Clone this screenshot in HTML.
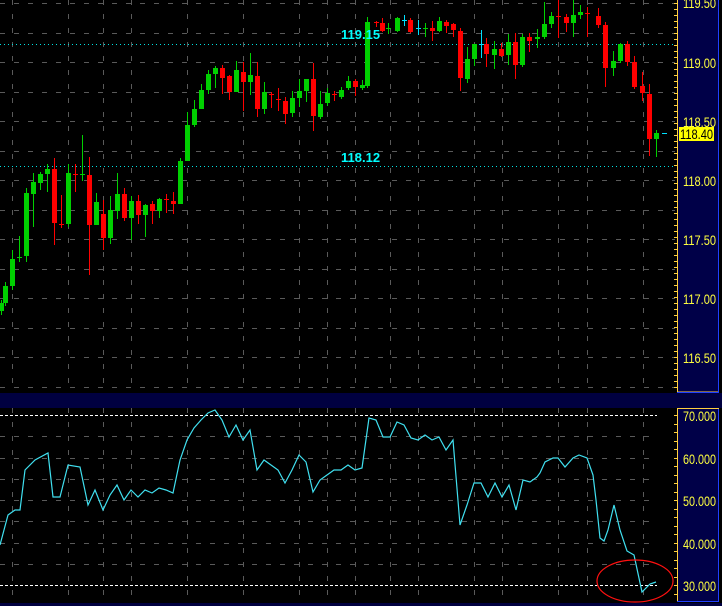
<!DOCTYPE html><html><head><style>body{margin:0;background:#000;width:722px;height:606px;overflow:hidden}svg{display:block}</style></head><body>
<svg id="s" width="722" height="606" xmlns="http://www.w3.org/2000/svg" font-family="Liberation Sans, sans-serif">
<rect width="722" height="606" fill="#000"/>
<g id="grid" stroke="#5a5a5a" stroke-width="1" stroke-dasharray="5,9"></g>
<line x1="0" y1="44.5" x2="675" y2="44.5" stroke="#00e0e0" stroke-dasharray="1,3"/>
<line x1="0" y1="166.5" x2="675" y2="166.5" stroke="#00e0e0" stroke-dasharray="1,3"/>
<g id="c"></g>
<text x="341" y="39" fill="#00ffff" font-size="13" font-weight="bold">119.15</text>
<text x="341" y="162" fill="#00ffff" font-size="13" font-weight="bold">118.12</text>
<rect x="0" y="393" width="722" height="15" fill="#000040"/>
<rect x="0" y="603" width="722" height="3" fill="#000040"/>
<line x1="0" y1="415.5" x2="657" y2="415.5" stroke="#fff" stroke-dasharray="3,2"/>
<line x1="0" y1="585.5" x2="657" y2="585.5" stroke="#fff" stroke-dasharray="3,2"/>
<polyline id="rsi" fill="none" stroke="#40e0f0" stroke-width="1.2"/>
<ellipse cx="635" cy="581" rx="38" ry="21" fill="none" stroke="#ff1010" stroke-width="1.2"/>
<rect x="677.5" y="-1" width="41" height="393" fill="#000048" stroke="#ffd040"/>
<line x1="718.5" y1="0" x2="718.5" y2="392" stroke="#2040ff"/>
<line x1="677" y1="392.5" x2="719" y2="392.5" stroke="#2040ff"/>
<rect x="677.5" y="408.5" width="41" height="193" fill="#000048" stroke="#ffd040"/>
<line x1="718.5" y1="409" x2="718.5" y2="602" stroke="#2040ff"/>
<line x1="677" y1="601.5" x2="719" y2="601.5" stroke="#2040ff"/>
<g id="ticks" stroke="#ffd040"></g>
<g fill="#ffff40" font-size="14">
<text x="683" y="8" textLength="33" lengthAdjust="spacingAndGlyphs">119.50</text><text x="683" y="68" textLength="33" lengthAdjust="spacingAndGlyphs">119.00</text><text x="683" y="127" textLength="33" lengthAdjust="spacingAndGlyphs">118.50</text><text x="683" y="186" textLength="33" lengthAdjust="spacingAndGlyphs">118.00</text><text x="683" y="245" textLength="33" lengthAdjust="spacingAndGlyphs">117.50</text><text x="683" y="304" textLength="33" lengthAdjust="spacingAndGlyphs">117.00</text><text x="683" y="363" textLength="33" lengthAdjust="spacingAndGlyphs">116.50</text>
<text x="683" y="421" textLength="33" lengthAdjust="spacingAndGlyphs">70.000</text><text x="683" y="464" textLength="33" lengthAdjust="spacingAndGlyphs">60.000</text><text x="683" y="506" textLength="33" lengthAdjust="spacingAndGlyphs">50.000</text><text x="683" y="549" textLength="33" lengthAdjust="spacingAndGlyphs">40.000</text><text x="683" y="591" textLength="33" lengthAdjust="spacingAndGlyphs">30.000</text>
</g>
<rect x="679" y="127" width="35" height="14" fill="#ffff00"/>
<text x="680" y="139" fill="#000" font-size="14" textLength="33" lengthAdjust="spacingAndGlyphs">118.40</text>
</svg>
<script>
var NS="http://www.w3.org/2000/svg";
function el(p,t,a){var e=document.createElementNS(NS,t);for(var k in a)e.setAttribute(k,a[k]);p.appendChild(e);return e;}
var g=document.getElementById('grid');
var vx=[12,68,103,131,187,243,299,327,355,390,418,474,502,558,587,643];
vx.forEach(function(x){el(g,'line',{x1:x+.5,y1:0,x2:x+.5,y2:392});el(g,'line',{x1:x+.5,y1:408,x2:x+.5,y2:602});});
for(var i=0;i<14;i++){var y=Math.round(3+i*29.5)+.5;el(g,'line',{x1:0,y1:y,x2:675,y2:y});}
[436,458,479,500,521,543,564].forEach(function(y){el(g,'line',{x1:0,y1:y+.5,x2:657,y2:y+.5});});
var t=document.getElementById('ticks');
for(var y=3;y<392;y+=6){el(t,'line',{x1:674,y1:y+.5,x2:678,y2:y+.5});}
for(var y=415;y<600;y+=8.5){el(t,'line',{x1:674,y1:Math.round(y)+.5,x2:678,y2:Math.round(y)+.5});}
var C=[[1,303,311,'g',300,315],[5,286,303,'g',282,306],[12,259,286,'g',250,290],[19,257,257,'g',236,262],[26,193,256,'g',188,262],[33,182,194,'g',173,227],[40,174,183,'g',172,190],[47,169,174,'g',164,192],[54,169,223,'r',158,245],[61,224,224,'r',195,228],[68,173,224,'g',164,227],[75,174,174,'r',164,192],[82,174,174,'g',135,181],[89,175,225,'r',157,275],[96,202,225,'g',193,225],[103,214,238,'r',200,250],[110,210,238,'g',196,244],[117,194,211,'g',173,219],[124,194,218,'r',188,221],[131,201,218,'g',196,240],[138,201,215,'r',195,224],[145,205,215,'g',204,237],[152,204,211,'r',201,224],[159,199,211,'g',198,218],[166,199,199,'r',194,213],[173,201,204,'r',192,214],[180,161,204,'g',158,204],[187,125,161,'g',112,161],[194,109,125,'g',100,127],[201,90,109,'g',84,109],[208,74,90,'g',70,94],[215,68,74,'g',66,88],[222,68,78,'r',65,94],[229,76,92,'r',75,100],[236,70,92,'g',61,92],[243,72,82,'r',62,111],[250,75,82,'g',53,95],[257,76,109,'r',62,117],[264,92,109,'g',82,114],[271,94,94,'r',92,108],[278,99,99,'r',88,111],[285,101,114,'r',97,124],[292,98,113,'g',91,117],[299,91,98,'g',79,107],[306,79,91,'g',85,102],[313,79,116,'r',63,131],[320,104,117,'g',91,119],[327,93,103,'g',88,106],[334,94,94,'r',91,101],[341,90,97,'g',87,99],[348,81,88,'g',76,90],[355,81,87,'r',79,96],
[362,85,88,'g',80,90],[367,22,86,'g',17,88],[376,22,22,'r',21,27],[382,23,31,'r',18,32],[388,28,28,'g',23,34],[397,18,31,'g',17,32],[404,20,20,'c',15,26],[410,20,32,'r',18,33],[418,28,28,'c',20,35],[425,28,28,'g',23,37],[432,28,31,'r',21,41],[439,21,31,'g',17,32],[446,22,26,'r',20,33],[453,24,30,'r',23,37],[460,31,78,'r',28,91],[467,59,79,'g',47,83],[474,44,59,'g',44,66],[481,44,44,'c',30,58],[486,44,54,'r',38,67],[494,49,55,'g',41,69],[501,49,56,'r',43,57],[508,42,55,'g',34,65],[515,42,65,'r',33,79],[522,37,65,'g',34,67],[529,37,41,'r',33,52],[537,37,39,'g',29,48],[544,24,37,'g',2,39],[551,16,24,'g',12,28],[558,16,16,'r',0,38],[566,17,23,'r',14,32],[573,15,23,'g',0,37],[580,12,15,'g',5,19],[587,13,13,'r',7,37],[598,16,25,'r',8,28],[605,25,68,'r',22,87],[613,61,68,'g',51,76],[620,44,61,'g',43,63],[627,44,62,'r',41,66],[634,62,87,'r',56,89],[642,86,93,'r',72,101],[649,94,139,'r',84,156],[656,133,139,'g',130,157],[664,133,133,'c',133,133]];
var cg=document.getElementById('c');
var col={g:'#00d000',r:'#ff0000',c:'#00e0ff'};
C.forEach(function(d){var x=d[0],c=col[d[3]];
 el(cg,'line',{x1:x+.5,y1:d[4],x2:x+.5,y2:d[5],stroke:c});
 var h=Math.max(d[2]-d[1],1);
 el(cg,'rect',{x:x-2,y:d[1],width:5,height:h,fill:c});});
var R=[[0,545],[8,515],[15,510],[20,510],[25,470],[35,460],[48,453],[53,497],[60,497],[68,465],[80,467],[88,505],[95,490],[103,510],[110,495],[117,485],[124,500],[131,490],[138,497],[145,490],[152,493],[159,488],[166,490],[173,493],[180,460],[187,440],[194,428],[201,420],[208,413],[215,410],[222,420],[229,437],[236,425],[243,440],[250,430],[257,470],[264,460],[271,465],[278,470],[285,483],[292,470],[299,455],[306,462],[313,492],[320,480],[327,475],[334,470],[341,470],[348,465],[355,470],[362,468],[369,418],[376,420],[383,437],[390,437],[397,422],[404,425],[411,438],[418,440],[425,435],[432,440],[439,437],[446,450],[453,440],[460,525],[467,505],[474,483],[481,483],[488,497],[495,483],[502,497],[509,485],[516,510],[523,480],[530,482],[537,477],[540,473],[545,462],[553,458],[558,458],[565,467],[573,458],[579,455],[587,458],[593,475],[596,500],[600,538],[604,541],[608,530],[614,505],[620,530],[627,551],[634,555],[642,592],[650,584],[656,582]];
document.getElementById('rsi').setAttribute('points',R.map(function(p){return p.join(',')}).join(' '));
</script>
</body></html>
